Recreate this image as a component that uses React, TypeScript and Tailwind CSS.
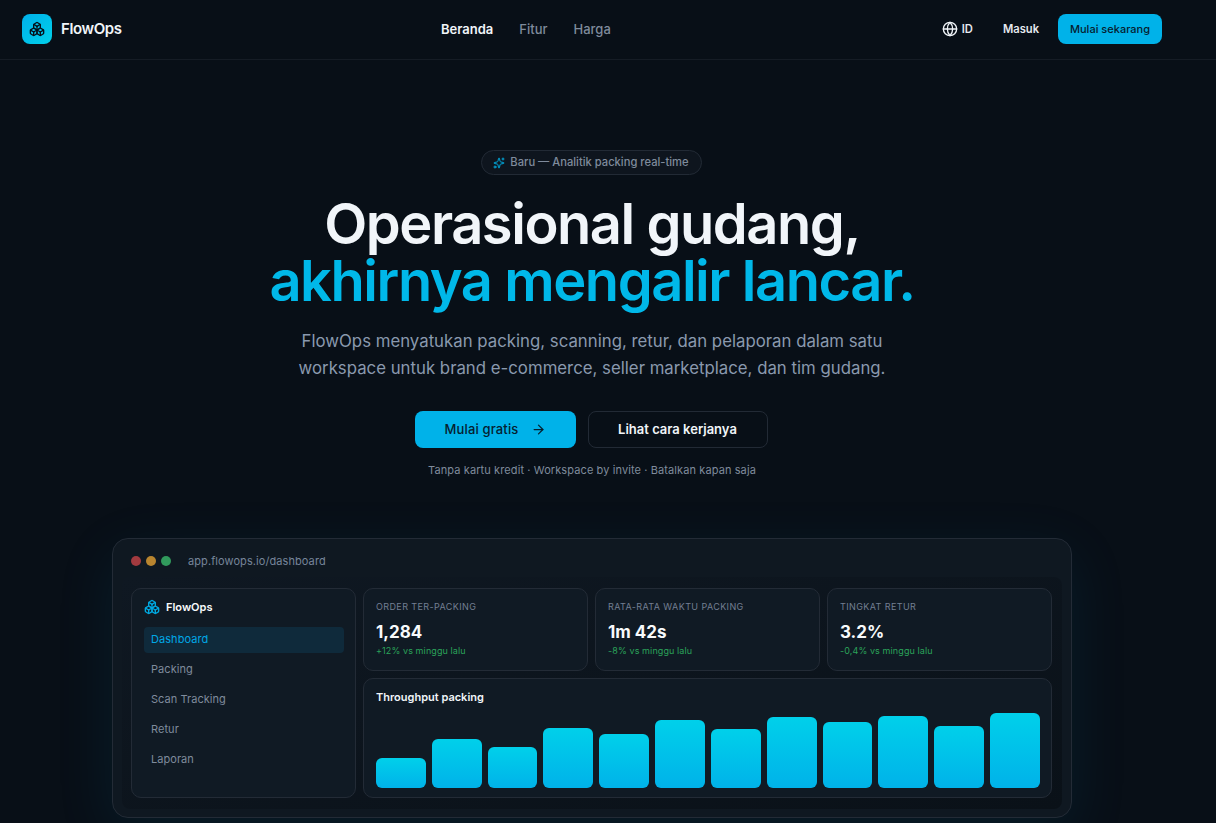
import { ArrowRight, Boxes, Globe, Sparkles } from "lucide-react";

const stats = [
  { label: "ORDER TER-PACKING", value: "1,284", note: "+12% vs minggu lalu" },
  { label: "RATA-RATA WAKTU PACKING", value: "1m 42s", note: "-8% vs minggu lalu" },
  { label: "TINGKAT RETUR", value: "3.2%", note: "-0,4% vs minggu lalu" },
];

const menu = ["Dashboard", "Packing", "Scan Tracking", "Retur", "Laporan"];

const bars = [30, 49, 41, 60, 54, 68, 59, 71, 66, 72, 62, 75];

function Navbar() {
  return (
    <nav className="h-[60px] border-b border-[#151c25]">
      <div className="flex h-[58px] w-[1184px] items-center px-[22px]">
        {/* Logo */}
        <div className="flex w-[100px] items-center gap-[9px]">
          <div className="flex h-[30px] w-[30px] items-center justify-center rounded-lg bg-gradient-to-br from-[#00b0ea] to-[#00d0ea]">
            <Boxes size={16} className="text-[#06101a]" />
          </div>
          <span className="mt-px text-[15px] font-semibold tracking-[-0.4px] text-[#f1f5f9]">FlowOps</span>
        </div>

        {/* Center links */}
        <div className="ml-[319px] mt-px flex items-center gap-[26px] text-[13px] font-medium text-[#7f8b9c]">
          <span className="font-semibold text-[#f1f5f9]">Beranda</span>
          <span>Fitur</span>
          <span>Harga</span>
        </div>

        {/* Right side */}
        <div className="ml-auto flex items-center text-[11.2px] font-semibold text-[#e5e9ef]">
          <Globe size={16} className="text-[#f1f5f9]" />
          <span className="ml-[4px]">ID</span>
          <span className="ml-[30px]">Masuk</span>
          <button className="ml-[19px] h-[30px] w-[104px] rounded-lg bg-[#00b2e9] text-[11px] font-medium text-[#06202f]">
            Mulai sekarang
          </button>
        </div>
      </div>
    </nav>
  );
}

function Hero() {
  return (
    <section className="flex flex-col items-center pt-[90px]">
      <div className="-ml-[2px] flex h-[25px] w-[221px] items-center justify-center gap-[5px] rounded-full border border-[#222a35] bg-[#0e151e] text-[11.2px] font-medium text-[#7f8b9c]">
        <Sparkles size={12} className="text-[#00a8dc]" />
        Baru — Analitik packing real-time
      </div>

      <h1 className="mt-[21px] text-center text-[56px] font-semibold leading-[57px] tracking-[-1.45px] text-[#f1f5f9]">
        Operasional gudang,
        <br />
        <span className="text-[#00b8e9]">akhirnya mengalir lancar.</span>
      </h1>

      <p className="mt-[18px] w-[640px] text-center text-[16.8px] leading-[27px] text-[#8a99ae]">
        FlowOps menyatukan packing, scanning, retur, dan pelaporan dalam satu workspace untuk brand e-commerce, seller marketplace, dan tim gudang.
      </p>

      <div className="-ml-[2px] mt-[29px] flex gap-3">
        <button className="flex h-[37px] w-[161px] items-center justify-center gap-[12px] rounded-lg bg-[#00b2e9] text-[13px] font-medium tracking-[0.15px] text-[#06202f]">
          Mulai gratis
          <ArrowRight size={15} />
        </button>
        <button className="h-[37px] w-[180px] rounded-lg border border-[#222a35] text-[13px] font-semibold text-[#f1f5f9]">
          Lihat cara kerjanya
        </button>
      </div>

      <p className="mt-[14px] text-[11px] tracking-[0.1px] text-[#7f8b9c]">
        Tanpa kartu kredit · Workspace by invite · Batalkan kapan saja
      </p>
    </section>
  );
}

function Sidebar() {
  return (
    <aside className="flex w-[225px] flex-col rounded-[10px] border border-[#232b36] bg-[#101a24] pb-[11px] pl-3 pr-[11px] pt-[10px]">
      <div className="flex items-center gap-[6px] text-[11px] font-semibold text-[#f8fafc]">
        <Boxes size={16} className="text-[#00a8e0]" />
        FlowOps
      </div>
      <ul className="mt-[12px] flex flex-col gap-1 text-[11px] tracking-[0.05px] text-[#7f8b9c]">
        {menu.map((item) => (
          <li
            key={item}
            className={
              item === "Dashboard"
                ? "flex h-[26px] items-center rounded bg-[#0f2a3b] px-[7px] pb-[1px] text-[#00a8e6]"
                : "flex h-[26px] items-center px-[7px] pb-[1px]"
            }
          >
            {item}
          </li>
        ))}
      </ul>
    </aside>
  );
}

function DashboardPreview() {
  return (
    <section className="mx-auto mt-[59px] h-[280px] w-[960px] rounded-2xl border border-[#232b36] bg-[#0f1821] shadow-[0_16px_60px_rgba(0,150,200,0.1)]">
      {/* Window bar */}
      <div className="flex h-[38px] items-center px-[18px] pt-[7px]">
        <div className="flex gap-[5px]">
          <span className="h-[10px] w-[10px] rounded-full bg-[#a23a3f]" />
          <span className="h-[10px] w-[10px] rounded-full bg-[#b9852f]" />
          <span className="h-[10px] w-[10px] rounded-full bg-[#319a5c]" />
        </div>
        <span className="ml-[17px] text-[11px] tracking-[0.08px] text-[#76859a]">app.flowops.io/dashboard</span>
      </div>

      {/* App frame */}
      <div className="mx-[9px] flex h-[232px] gap-[7px] rounded-lg bg-gradient-to-br from-[#0f1822] to-[#0a1118] p-[11px] pb-0 pl-[9px] pr-[10px]">
        <div className="flex h-[210px]">
          <Sidebar />
        </div>
        <div className="flex h-[210px] flex-1 flex-col gap-[7px]">
          <div className="grid grid-cols-3 gap-[7px]">
            {stats.map((s) => (
              <div key={s.label} className="h-[83px] rounded-[10px] border border-[#232b36] bg-[#101a24] px-3 pt-[11px]">
                <div className="text-[9px] leading-[13px] tracking-[0.4px] text-[#737f92]">{s.label}</div>
                <div className="mt-[7px] text-[17px] font-bold leading-[24px] text-[#f8fafc]">{s.value}</div>
                <div className="text-[9px] leading-[13px] tracking-[0.1px] text-[#2ba35a]">{s.note}</div>
              </div>
            ))}
          </div>
          <div className="flex flex-1 flex-col rounded-[10px] border border-[#232b36] bg-[#101a24] pb-[9px] pl-3 pr-[11px] pt-[10px]">
            <div className="text-[11px] font-semibold leading-[16px] text-[#f1f5f9]">Throughput packing</div>
            <div className="flex flex-1 items-end gap-[6px]">
              {bars.map((h, i) => (
                <div
                  key={i}
                  className="flex-1 rounded-md bg-gradient-to-b from-[#00d0ea] to-[#00b2e9]"
                  style={{ height: h }}
                />
              ))}
            </div>
          </div>
        </div>
      </div>
    </section>
  );
}

export default function App() {
  return (
    <div className="h-[823px] overflow-hidden bg-[#080f17] font-['Inter',sans-serif]">
      <Navbar />
      <div className="w-[1184px]">
        <Hero />
        <DashboardPreview />
      </div>
    </div>
  );
}
